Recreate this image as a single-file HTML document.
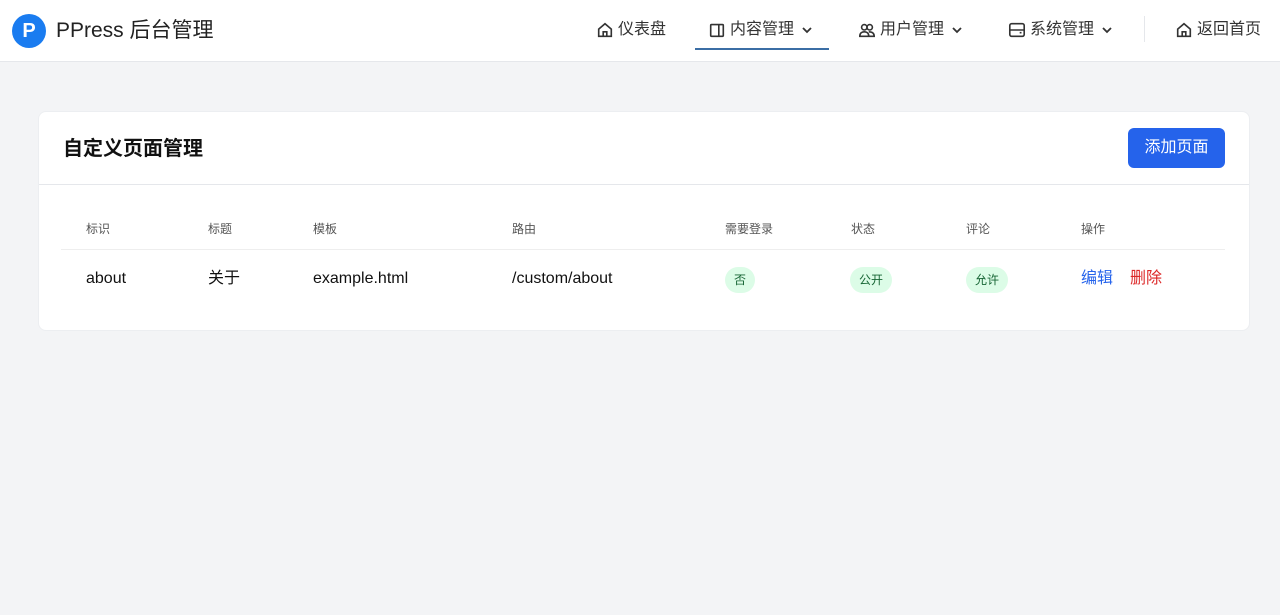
<!DOCTYPE html>
<html><head><meta charset="utf-8"><style>
*{box-sizing:border-box;margin:0;padding:0}
body{width:1280px;height:615px;background:#f3f4f6;font-family:"Liberation Sans","Noto Sans CJK SC",sans-serif;color:#111;position:relative;overflow:hidden}
.hdr{position:absolute;left:0;top:0;width:1280px;height:62px;background:#fff;border-bottom:1px solid #e5e7eb}
.logo{position:absolute;left:12px;top:14px;width:34px;height:34px;border-radius:50%;background:#1a7cf0;color:#fff;font-weight:bold;font-size:20px;text-align:center;line-height:34px}
.title{position:absolute;left:56px;top:17px;font-size:21px;line-height:28px;color:#222}
.nav{position:absolute;top:19px;height:22px;line-height:22px;font-size:16px;color:#333;display:flex;align-items:center;gap:4px}
.nav svg{width:18px;height:18px;fill:none;stroke:#333;stroke-width:1.8}
.nav svg.ch{width:12px;height:12px;margin-left:3px}
.card{position:absolute;left:38px;top:111px;width:1212px;height:220px;background:#fff;border-radius:8px;border:1px solid #eceef1}
.chd{height:73px;border-bottom:1px solid #e5e7eb;position:relative}
.chd h2{position:absolute;left:24px;top:24px;font-size:20px;line-height:26px;font-weight:bold}
.btn{position:absolute;right:24px;top:16px;width:97px;height:40px;background:#2563eb;color:#fff;border-radius:6px;font-size:16px;text-align:center;line-height:40px}
.th{position:absolute;top:109px;font-size:12px;line-height:16px;color:#555}
.td{position:absolute;top:156px;font-size:16px;line-height:22px;color:#111}
.line{position:absolute;left:22px;right:24px;top:137px;border-top:1px solid #eee}
.b{position:absolute;top:155px;height:26px;line-height:26px;border-radius:13px;background:#dcfce7;color:#166534;font-size:12px;padding:0 9px}
</style></head><body>
<div class="hdr">
<div class="logo">P</div><div class="title">PPress 后台管理</div>
<div class="nav" style="left:596px"><svg viewBox="0 0 20 20"><path d="M3 9l7-6 7 6v8H3z M8 17v-5h4v5"/></svg>仪表盘</div>
<div class="nav" style="left:708px"><svg viewBox="0 0 20 20"><rect x="3" y="4" width="14" height="13" rx="1"/><path d="M12 4v13"/></svg>内容管理<svg class="ch" viewBox="0 0 12 12"><path d="M2 4l4 4 4-4"/></svg></div>
<div style="position:absolute;left:695px;top:48px;width:134px;height:2px;background:#3b6ea5"></div>
<div class="nav" style="left:858px"><svg viewBox="0 0 20 20"><circle cx="7" cy="7" r="3"/><circle cx="13" cy="7" r="3"/><path d="M2 17c0-4 3-5 5-5s5 1 5 5z M12 12c3 0 6 1 6 5h-6"/></svg>用户管理<svg class="ch" viewBox="0 0 12 12"><path d="M2 4l4 4 4-4"/></svg></div>
<div class="nav" style="left:1008px"><svg viewBox="0 0 20 20"><rect x="2" y="3" width="16" height="14" rx="2"/><path d="M2 10h16 M13 13h2"/></svg>系统管理<svg class="ch" viewBox="0 0 12 12"><path d="M2 4l4 4 4-4"/></svg></div>
<div style="position:absolute;left:1144px;top:16px;height:26px;border-left:1px solid #e5e7eb"></div>
<div class="nav" style="left:1175px"><svg viewBox="0 0 20 20"><path d="M3 9l7-6 7 6v8H3z M8 17v-5h4v5"/></svg>返回首页</div>
</div>
<div class="card">
<div class="chd"><h2>自定义页面管理</h2><div class="btn">添加页面</div></div>
<div class="th" style="left:47px">标识</div><div class="th" style="left:169px">标题</div><div class="th" style="left:274px">模板</div><div class="th" style="left:473px">路由</div><div class="th" style="left:686px">需要登录</div><div class="th" style="left:812px">状态</div><div class="th" style="left:927px">评论</div><div class="th" style="left:1042px">操作</div>
<div class="line"></div>
<div class="td" style="left:47px">about</div><div class="td" style="left:169px">关于</div><div class="td" style="left:274px">example.html</div><div class="td" style="left:473px">/custom/about</div>
<div class="b" style="left:686px">否</div><div class="b" style="left:811px">公开</div><div class="b" style="left:927px">允许</div>
<div class="td" style="left:1042px;color:#2563eb">编辑</div><div class="td" style="left:1091px;color:#dc2626">删除</div>
</div>
</body></html>
